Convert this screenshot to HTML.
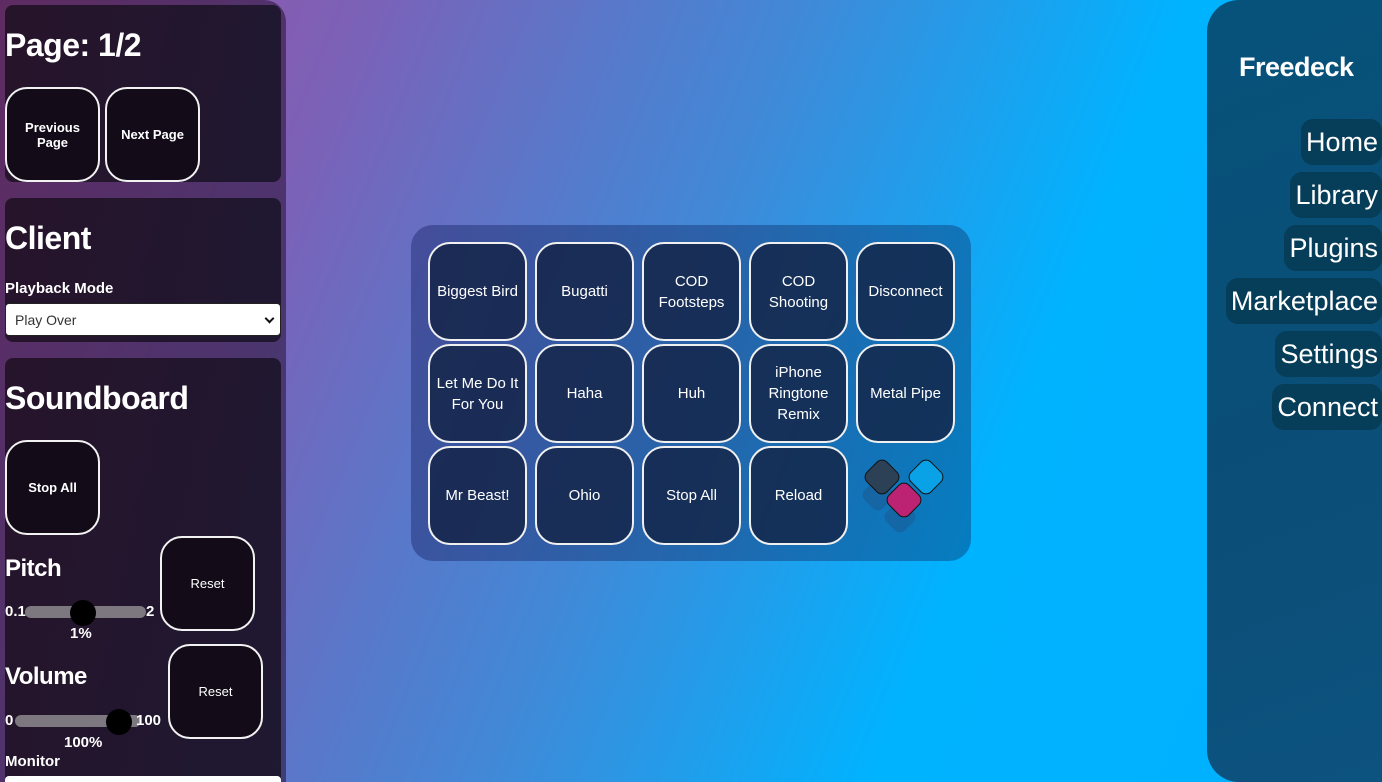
<!DOCTYPE html>
<html><head><meta charset="utf-8"><style>
*{box-sizing:border-box;margin:0;padding:0}
html,body{width:1382px;height:782px;overflow:hidden}
body{font-family:"Liberation Sans",sans-serif;color:#fff;position:relative;
background:linear-gradient(112deg,#a04f9e 0%,#7a62b8 22%,#3f8ad8 48%,#00b3ff 70%,#00b0ff 100%);}
.left{position:absolute;left:0;top:0;width:286px;height:782px;background:rgba(40,15,50,.55);border-radius:0 22px 0 0}
.card{position:absolute;left:5px;width:276px;background:linear-gradient(100deg,rgba(34,18,38,.93),rgba(28,22,44,.93));border-radius:8px;overflow:hidden}
.sb{position:absolute;width:95px;height:95px;border:2px solid #f2f2f2;border-radius:22px;background:#130b18;display:flex;align-items:center;justify-content:center;text-align:center;font-size:13px;font-weight:bold;line-height:15px}
h1{position:absolute;left:0;font-size:32px;font-weight:bold;letter-spacing:-0.5px}
.lbl{position:absolute;left:0;font-size:15px;font-weight:bold}
.sel{position:absolute;left:0;top:105px;width:276px;height:33px;background:#fff;border:1px solid #222;border-radius:4px;color:#333;font-size:14px;padding:8px 9px}
.sel:after{content:"";position:absolute;right:7px;top:11px;width:5px;height:5px;border-right:2px solid #111;border-bottom:2px solid #111;transform:rotate(45deg)}
.track{position:absolute;height:12px;background:#7d7880;border-radius:6px}
.knob{position:absolute;width:26px;height:26px;background:#000;border-radius:50%}
.sm{position:absolute;font-size:15px;font-weight:bold}
.right{position:absolute;left:1207px;top:0;width:175px;height:782px;background:linear-gradient(160deg,#06527a,#0b4e77 60%,#0d5380);border-radius:32px 0 0 32px}
.nav{position:absolute;right:0;height:46px;background:#063d58;border-radius:12px;font-size:27px;padding:0 4px 0 5px;line-height:46px}
.grid{position:absolute;left:411px;top:225px;width:560px;height:336px;border-radius:22px;background:linear-gradient(100deg,rgba(40,50,120,.55),rgba(10,80,140,.55))}
.b{position:absolute;width:99px;height:99px;border:2px solid #f0f0f0;border-radius:22px;background:rgba(20,35,70,.82);display:flex;align-items:center;justify-content:center;text-align:center;font-size:15px;line-height:21px;padding:0 3px}
</style></head><body>
<div class="left"></div>
<div class="card" style="top:5px;height:177px">
 <h1 style="top:22px">Page: 1/2</h1>
 <div class="sb" style="left:0;top:82px">Previous<br>Page</div>
 <div class="sb" style="left:100px;top:82px">Next Page</div>
</div>
<div class="card" style="top:198px;height:144px">
 <h1 style="top:22px">Client</h1>
 <div class="lbl" style="top:82px">Playback Mode</div>
 <div class="sel">Play Over</div>
</div>
<div class="card" style="top:358px;height:424px;border-radius:8px 8px 0 0">
 <h1 style="top:22px">Soundboard</h1>
 <div class="sb" style="left:0;top:82px">Stop All</div>
 <h1 style="top:197px;font-size:24px">Pitch</h1>
 <div class="sb" style="left:155px;top:178px;font-weight:normal">Reset</div>
 <div class="sm" style="left:0;top:245px">0.1</div>
 <div class="track" style="left:20px;top:248px;width:121px"></div>
 <div class="knob" style="left:65px;top:242px"></div>
 <div class="sm" style="left:141px;top:245px">2</div>
 <div class="sm" style="left:65px;top:267px">1%</div>
 <h1 style="top:305px;font-size:24px">Volume</h1>
 <div class="sb" style="left:163px;top:286px;font-weight:normal">Reset</div>
 <div class="sm" style="left:0;top:354px">0</div>
 <div class="track" style="left:10px;top:357px;width:126px"></div>
 <div class="knob" style="left:101px;top:351px"></div>
 <div class="sm" style="left:131px;top:354px">100</div>
 <div class="sm" style="left:59px;top:376px">100%</div>
 <div class="lbl" style="top:395px">Monitor</div>
 <div style="position:absolute;left:0;top:418px;width:276px;height:30px;background:#fff;border-radius:4px"></div>
</div>

<div class="grid">
 <div class="b" style="left:17px;top:17px">Biggest Bird</div>
 <div class="b" style="left:124px;top:17px">Bugatti</div>
 <div class="b" style="left:231px;top:17px">COD<br>Footsteps</div>
 <div class="b" style="left:338px;top:17px">COD<br>Shooting</div>
 <div class="b" style="left:445px;top:17px">Disconnect</div>
 <div class="b" style="left:17px;top:119px">Let Me Do It<br>For You</div>
 <div class="b" style="left:124px;top:119px">Haha</div>
 <div class="b" style="left:231px;top:119px">Huh</div>
 <div class="b" style="left:338px;top:119px">iPhone<br>Ringtone<br>Remix</div>
 <div class="b" style="left:445px;top:119px">Metal Pipe</div>
 <div class="b" style="left:17px;top:221px">Mr Beast!</div>
 <div class="b" style="left:124px;top:221px">Ohio</div>
 <div class="b" style="left:231px;top:221px">Stop All</div>
 <div class="b" style="left:338px;top:221px">Reload</div>
 <svg style="position:absolute;left:445px;top:230px" width="110" height="90">
  <rect x="9" y="27" width="26" height="26" rx="7" fill="#1d4f84" opacity=".4" transform="rotate(45 22 40)"/>
  <rect x="31" y="49" width="26" height="26" rx="7" fill="#1d4f84" opacity=".4" transform="rotate(45 44 62)"/>
  <rect x="12" y="8" width="28" height="28" rx="7" fill="#2c4156" stroke="#111" stroke-width="1" transform="rotate(45 26 22)"/>
  <rect x="56" y="8" width="28" height="28" rx="7" fill="#0aa2e6" stroke="#111" stroke-width="1" transform="rotate(45 70 22)"/>
  <rect x="34" y="31" width="28" height="28" rx="7" fill="#bc2473" stroke="#111" stroke-width="1" transform="rotate(45 48 45)"/>
 </svg>
</div>

<div class="right">
 <div style="position:absolute;left:32px;top:52px;font-size:27px;font-weight:bold;letter-spacing:-0.5px">Freedeck</div>
 <div class="nav" style="top:119px">Home</div>
 <div class="nav" style="top:172px">Library</div>
 <div class="nav" style="top:225px">Plugins</div>
 <div class="nav" style="top:278px">Marketplace</div>
 <div class="nav" style="top:331px">Settings</div>
 <div class="nav" style="top:384px">Connect</div>
</div>
</body></html>
